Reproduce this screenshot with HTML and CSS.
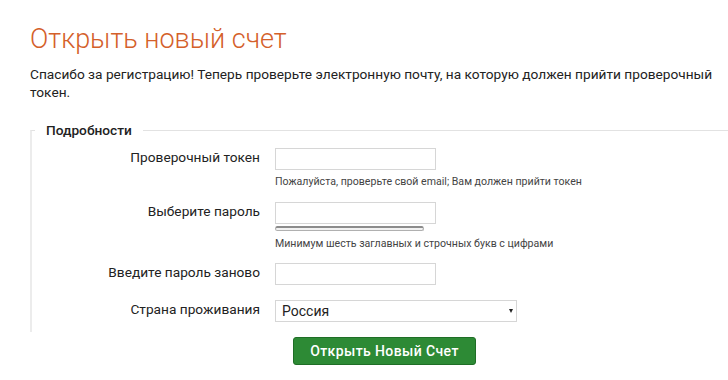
FILE: index.html
```html
<!DOCTYPE html>
<html lang="ru">
<head>
<meta charset="utf-8">
<title>Открыть новый счет</title>
<link rel="stylesheet" href="styles.css">
</head>
<body>
<main class="page">
  <h1 class="title">Открыть новый счет</h1>
  <p class="intro">Спасибо за регистрацию! Теперь проверьте электронную почту, на которую должен прийти проверочный токен.</p>
  <form class="form">
    <fieldset class="details">
      <legend class="legend">Подробности</legend>
      <div class="row">
        <label class="label" for="token">Проверочный токен</label>
        <div class="control">
          <input class="input" id="token" type="text">
          <div class="help">Пожалуйста, проверьте свой email; Вам должен прийти токен</div>
        </div>
      </div>
      <div class="row row-gap">
        <label class="label" for="pw">Выберите пароль</label>
        <div class="control">
          <input class="input" id="pw" type="password">
          <div class="strength"></div>
          <div class="help help-after-bar">Минимум шесть заглавных и строчных букв с цифрами</div>
        </div>
      </div>
      <div class="row row-gap2">
        <label class="label" for="pw2">Введите пароль заново</label>
        <div class="control">
          <input class="input" id="pw2" type="password">
        </div>
      </div>
      <div class="row row-gap3">
        <label class="label" for="country">Страна проживания</label>
        <div class="control">
          <span class="select-wrap">
            <select class="select" id="country">
              <option>Россия</option>
            </select>
          </span>
        </div>
      </div>
    </fieldset>
    <div class="actions">
      <button class="btn" type="button">Открыть Новый Счет</button>
    </div>
  </form>
</main>
</body>
</html>
```

FILE: styles.css
```css
* { box-sizing: border-box; }
html, body { margin: 0; padding: 0; background: #fff; }
body {
  font-family: Roboto, "Noto Sans", "Liberation Sans", sans-serif;
  color: #222;
  font-size: 13.7px;
}
.page { padding: 21px 0 0 30px; }
.title {
  margin: 0;
  font-size: 27px;
  line-height: 36px;
  font-weight: 300;
  color: #d4602a;
}
.intro {
  margin: 8px 0 0 0;
  font-size: 13.7px;
  line-height: 18px;
}
.form { margin-top: 20px; }
.details {
  margin: 0;
  padding: 9px 0 10px 3px;
  border: none;
  border-top: 1px solid #e2e2e2;
  border-left: 2px solid #ececec;
  min-width: 0;
}
.legend {
  padding: 0 11px;
  font-size: 13.7px;
  line-height: 18px;
  font-weight: 500;
  color: #222;
}
.row {
  display: grid;
  grid-template-columns: 225px 1fr;
  column-gap: 15px;
  align-items: start;
}
.row-gap { margin-top: 13px; }
.row-gap2 { margin-top: 12px; }
.row-gap3 { margin-top: 15px; }
.label {
  text-align: right;
  padding-top: 0;
  line-height: 18px;
  font-size: 13.7px;
  color: #222;
}
.control { display: flex; flex-direction: column; align-items: flex-start; }
.input {
  width: 161px;
  height: 22px;
  margin: 0;
  border: 1px solid #d6d6d6;
  border-radius: 0;
  padding: 2px 4px;
  font: inherit;
  background: #fff;
}
.help {
  margin-top: 5px;
  font-size: 10.6px;
  line-height: 14px;
  color: #444;
}
.help-after-bar { margin-top: 6px; }
.strength {
  margin-top: 2px;
  width: 149px;
  height: 5px;
  border: 1px solid #b0b0b0;
  border-top: 2px solid #8c8c8c;
  border-radius: 3px;
  background: #f2f2f2;
}
.select-wrap {
  position: relative;
  display: inline-block;
}
.select {
  appearance: none;
  -webkit-appearance: none;
  width: 242px;
  height: 22px;
  margin: 0;
  border: 1px solid #d6d6d6;
  border-radius: 0;
  padding: 0 20px 0 6px;
  font: inherit;
  font-size: 14px;
  color: #222;
  background: #fff;
}
.select-wrap::after {
  content: "";
  position: absolute;
  right: 4px;
  top: 9px;
  border-left: 2.5px solid transparent;
  border-right: 2.5px solid transparent;
  border-top: 4px solid #222;
  pointer-events: none;
}
.actions { padding: 5px 0 0 263px; }
.btn {
  width: 183px;
  height: 28px;
  margin: 0;
  padding: 0;
  border: 1px solid #1f6e26;
  border-radius: 3px;
  background: #2d8a35;
  color: #fff;
  font-family: Roboto, "Noto Sans", "Liberation Sans", sans-serif;
  font-size: 14px;
  font-weight: 500;
  letter-spacing: 0.4px;
  cursor: pointer;
}
```
